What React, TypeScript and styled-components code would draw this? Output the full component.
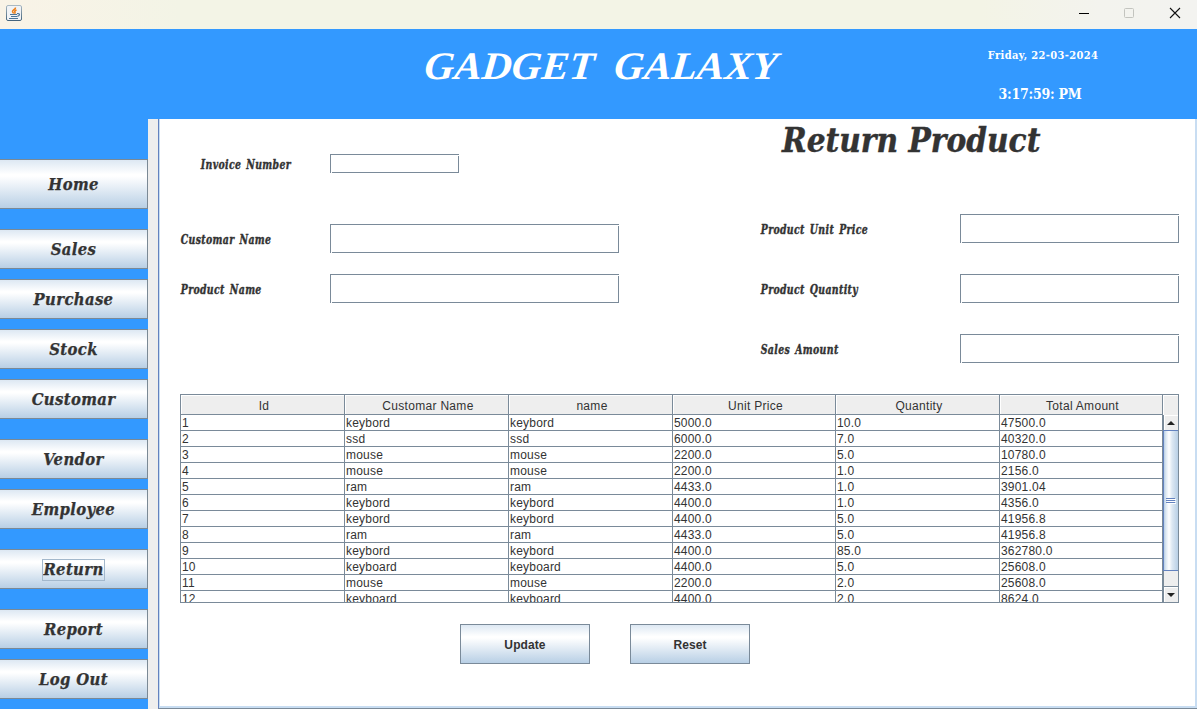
import React from "react";
import styled, { createGlobalStyle } from "styled-components";

const slab = `"DejaVu Serif Condensed", "DejaVu Serif", serif`;
const sans = `"Liberation Sans", Arial, sans-serif`;
const line = "#7a8a99";
const steel = "linear-gradient(#dde8f3 0%, #ffffff 30%, #ffffff 34%, #b8cfe5 100%)";

const GlobalStyle = createGlobalStyle`
  * { box-sizing: border-box; }
  body { margin: 0; background: #fff; overflow: hidden; }
`;

const Window = styled.div`
  width: 1197px;
  height: 709px;
  display: flex;
  flex-direction: column;
  font-family: ${sans};
  color: #333;
`;

const TitleBar = styled.div`
  height: 29px;
  flex: none;
  display: flex;
  align-items: flex-start;
  justify-content: space-between;
  padding: 5px 16px 0 6px;
  background: linear-gradient(90deg, #f9f3e7 0%, #f3f4e6 15%, #f3f4e6 82%, #f3f3ee 92%, #f3f3f0 100%);
`;

const Controls = styled.div`
  display: flex;
  gap: 34px;
  padding-top: 2px;
`;

const Header = styled.header`
  height: 90px;
  flex: none;
  display: grid;
  grid-template-columns: 424px 1fr 298px;
  background: #3399ff;
  color: #fff;
`;

const Brand = styled.h1`
  grid-column: 2;
  margin: 0;
  padding-top: 14px;
  font: italic bold 39px/46px "Liberation Serif", serif;
  white-space: pre;
  word-spacing: -3.5px;
  transform: scaleX(1.06) skewX(-5deg);
  transform-origin: left;
`;

const Clock = styled.div`
  display: flex;
  flex-direction: column;
  align-items: center;
  width: 282px;
  font-family: ${slab};
  font-weight: bold;
`;

const DateText = styled.div`
  font-size: 11px;
  line-height: 16px;
  margin: 19px 0 0 6px;
  letter-spacing: 0.35px;
`;

const TimeText = styled.div`
  font-size: 14px;
  line-height: 20px;
  margin-top: 20px;
  letter-spacing: -0.25px;
`;

const Body = styled.div`
  flex: 1;
  display: flex;
  min-height: 0;
`;

const Sidebar = styled.nav`
  width: 148px;
  flex: none;
  padding-top: 40px;
  background: #3399ff;
`;

const NavButton = styled.button<{ $height?: number; $gap?: number }>`
  display: flex;
  align-items: center;
  justify-content: center;
  width: 148px;
  height: ${(p) => p.$height ?? 40}px;
  margin: 0 0 ${(p) => p.$gap ?? 10}px;
  padding: 1px 0 0;
  border: 1px solid #7b8995;
  border-left: 0;
  background: ${steel};
  color: #333;
  font: italic bold 16.5px/22px ${slab};
  letter-spacing: 0.35px;
  -webkit-text-stroke: 0.25px #333;
`;

const NavText = styled.span<{ $focused?: boolean }>`
  padding: 0 1px;
  outline: ${(p) => (p.$focused ? "1px solid #a3b8cc" : "none")};
  outline-offset: -1px;
`;

const Divider = styled.div`
  width: 10px;
  flex: none;
  background: #eee;
`;

const Panel = styled.main`
  flex: 1;
  display: flex;
  flex-direction: column;
  min-width: 0;
  background: #fff;
  border-left: 1px solid #6382bf;
  border-bottom: 1px solid ${line};
  box-shadow: inset 1px 0 #c8ddf2, inset -2px -2px #c8ddf2;
  padding-left: 1px;
`;

const Form = styled.div`
  display: grid;
  grid-template-columns: 600px 1fr;
  height: 275px;
  flex: none;
`;

const Column = styled.div`
  display: flex;
  flex-direction: column;
`;

const Heading = styled.h2`
  margin: 0 0 51px 22px;
  font: italic bold 33px/44px ${slab};
  white-space: nowrap;
  -webkit-text-stroke: 0.4px #333;
`;

const Row = styled.label<{ $indent?: number; $label: number; $top?: number }>`
  display: grid;
  grid-template-columns: ${(p) => p.$label}px max-content;
  align-items: center;
  padding-left: ${(p) => p.$indent ?? 0}px;
  margin-top: ${(p) => p.$top ?? 0}px;
`;

const Label = styled.span`
  padding: 2px 0 0 1px;
  font: italic bold 13.3px/17px ${slab};
  letter-spacing: 0.45px;
  word-spacing: 2px;
  white-space: nowrap;
  -webkit-text-stroke: 0.4px #333;
  transform: scaleX(0.78);
  transform-origin: left;
`;

const Field = styled.input<{ $width: number; $height?: number }>`
  width: ${(p) => p.$width}px;
  height: ${(p) => p.$height ?? 29}px;
  padding: 0 5px;
  border: 0;
  border-radius: 0;
  outline: none;
  background:
    linear-gradient(${line}, ${line}) left top / 100% 1px no-repeat,
    linear-gradient(${line}, ${line}) left top / 1px 100% no-repeat,
    linear-gradient(${line}, ${line}) right bottom / 1px calc(100% - 2px) no-repeat,
    linear-gradient(${line}, ${line}) right bottom / calc(100% - 2px) 1px no-repeat,
    #fff;
`;

const TableFrame = styled.div`
  display: grid;
  grid-template-columns: 982px 16px;
  width: 999px;
  height: 209px;
  flex: none;
  margin-left: 20px;
  border: solid ${line};
  border-width: 1px 0 1px 1px;
  overflow: hidden;
`;

const TableRow = styled.div<{ $head?: boolean }>`
  display: grid;
  grid-template-columns: 164px 164px 164px 163px 164px 163px;
  grid-template-rows: 100%;
  height: ${(p) => (p.$head ? 20 : 16)}px;
  font-size: 12px;
  line-height: ${(p) => (p.$head ? 19 : 15)}px;
  text-align: ${(p) => (p.$head ? "center" : "left")};
  background: ${(p) => (p.$head ? "#eee" : "#fff")};
  letter-spacing: ${(p) => (p.$head ? 0.3 : 0.2)}px;
`;

const Cell = styled.div<{ $head?: boolean }>`
  padding: ${(p) => (p.$head ? "2px 0 0 3px" : "1px 1px 0")};
  border: solid ${line};
  border-width: 0 1px 1px 0;
  box-shadow: ${(p) => (p.$head ? "inset 1px 1px #fff" : "none")};
  white-space: nowrap;
`;

const TableBody = styled.div`
  height: 187px;
  overflow: hidden;
`;

const ScrollColumn = styled.div`
  display: flex;
  flex-direction: column;
  border-right: 1px solid ${line};
  background: #eee;
`;

const ScrollCorner = styled.div`
  height: 20px;
  flex: none;
  box-shadow: inset 1px 1px #fff;
`;

const ScrollButton = styled.div`
  height: 15px;
  flex: none;
  display: flex;
  align-items: center;
  justify-content: center;
  border-left: 1px solid ${line};
  box-shadow: inset 1px 1px #fff;
`;

const Thumb = styled.div`
  height: 141px;
  flex: none;
  display: flex;
  align-items: center;
  justify-content: center;
  padding-top: 1px;
  border: solid #6382bf;
  border-width: 1px 0 1px 1px;
  background: linear-gradient(90deg, #b8cfe5 0, #dde8f3 2px, #fff 5px, #dde8f3 8px, #b8cfe5 100%);
`;

const Track = styled.div`
  flex: 1;
  border-left: 1px solid ${line};
  border-bottom: 1px solid ${line};
`;

const Actions = styled.div`
  display: flex;
  gap: 40px;
  margin: 21px 0 0 300px;
`;

const ActionButton = styled.button<{ $width: number }>`
  width: ${(p) => p.$width}px;
  height: 40px;
  padding: 2px 0 0;
  border: 1px solid ${line};
  background: ${steel};
  color: #333;
  font: bold 12px ${sans};
  letter-spacing: 0.1px;
`;

const nav = [
  { text: "Home", height: 50, gap: 20 },
  { text: "Sales" },
  { text: "Purchase" },
  { text: "Stock" },
  { text: "Customar", gap: 20 },
  { text: "Vendor" },
  { text: "Employee", gap: 20 },
  { text: "Return", gap: 20, focused: true },
  { text: "Report" },
  { text: "Log Out" },
];

const columns = ["Id", "Customar Name", "name", "Unit Price", "Quantity", "Total Amount"];

const rows = [
  ["1", "keybord", "keybord", "5000.0", "10.0", "47500.0"],
  ["2", "ssd", "ssd", "6000.0", "7.0", "40320.0"],
  ["3", "mouse", "mouse", "2200.0", "5.0", "10780.0"],
  ["4", "mouse", "mouse", "2200.0", "1.0", "2156.0"],
  ["5", "ram", "ram", "4433.0", "1.0", "3901.04"],
  ["6", "keybord", "keybord", "4400.0", "1.0", "4356.0"],
  ["7", "keybord", "keybord", "4400.0", "5.0", "41956.8"],
  ["8", "ram", "ram", "4433.0", "5.0", "41956.8"],
  ["9", "keybord", "keybord", "4400.0", "85.0", "362780.0"],
  ["10", "keyboard", "keyboard", "4400.0", "5.0", "25608.0"],
  ["11", "mouse", "mouse", "2200.0", "2.0", "25608.0"],
  ["12", "keyboard", "keyboard", "4400.0", "2.0", "8624.0"],
];

function JavaIcon() {
  return (
    <svg width="16" height="16" viewBox="0 0 16 16" fill="none">
      <defs>
        <linearGradient id="frame" x1="0" y1="0" x2="0" y2="1">
          <stop offset="0" stopColor="#a9b8c2" />
          <stop offset="1" stopColor="#45647c" />
        </linearGradient>
      </defs>
      <rect x=".5" y=".5" width="15" height="15" rx="1.5" fill="#f1f3f6" stroke="url(#frame)" />
      <path d="M9.500 2.500C9.800 4.500 6.500 4.800 6.500 6.500c0 1 1 1.200 1.200 2M10.500 5C8.500 5.800 8.500 6.500 9 7.200c.3.5 0 1-.5 1.300" stroke="#ee7f18" strokeWidth="1.500" />
      <path d="M4 9.500h7M5 11.500h6M3 13.500h9M11 8.600c3.300-.6 3.200 2.200.3 2.800" stroke="#4f7597" strokeWidth="1.200" />
    </svg>
  );
}

export default function App() {
  return (
    <Window>
      <GlobalStyle />
      <TitleBar>
        <JavaIcon />
        <Controls>
          <svg width="12" height="12" viewBox="0 0 12 12">
            <path d="M2 6.500h10" stroke="#000" />
          </svg>
          <svg width="12" height="12" viewBox="0 0 12 12">
            <rect x="1.500" y="1.500" width="9" height="9" rx="1" fill="none" stroke="#c3c4bf" />
          </svg>
          <svg width="12" height="12" viewBox="0 0 12 12">
            <path d="M1 1l10 10M11 1L1 11" stroke="#111" strokeWidth="1.100" />
          </svg>
        </Controls>
      </TitleBar>
      <Header>
        <Brand>{"GADGET   GALAXY"}</Brand>
        <Clock>
          <DateText>Friday, 22-03-2024</DateText>
          <TimeText>3:17:59: PM</TimeText>
        </Clock>
      </Header>
      <Body>
        <Sidebar>
          {nav.map((n) => (
            <NavButton key={n.text} $height={n.height} $gap={n.gap}>
              <NavText $focused={n.focused}>{n.text}</NavText>
            </NavButton>
          ))}
        </Sidebar>
        <Divider />
        <Panel>
          <Form>
            <Column>
              <Row $indent={40} $label={130} $top={35}>
                <Label>Invoice Number</Label>
                <Field $width={129} $height={19} />
              </Row>
              <Row $indent={20} $label={150} $top={51}>
                <Label>Customar Name</Label>
                <Field $width={289} />
              </Row>
              <Row $indent={20} $label={150} $top={21}>
                <Label>Product Name</Label>
                <Field $width={289} />
              </Row>
            </Column>
            <Column>
              <Heading>Return Product</Heading>
              <Row $label={200}>
                <Label>Product Unit Price</Label>
                <Field $width={219} />
              </Row>
              <Row $label={200} $top={31}>
                <Label>Product Quantity</Label>
                <Field $width={219} />
              </Row>
              <Row $label={200} $top={31}>
                <Label>Sales Amount</Label>
                <Field $width={219} />
              </Row>
            </Column>
          </Form>
          <TableFrame>
            <div>
              <TableRow $head>
                {columns.map((c) => (
                  <Cell key={c} $head>{c}</Cell>
                ))}
              </TableRow>
              <TableBody>
                {rows.map((r) => (
                  <TableRow key={r[0]}>
                    {r.map((v, i) => (
                      <Cell key={i}>{v}</Cell>
                    ))}
                  </TableRow>
                ))}
              </TableBody>
            </div>
            <ScrollColumn>
              <ScrollCorner />
              <ScrollButton>
                <svg width="8" height="4" viewBox="0 0 8 4">
                  <path d="M0 4L4 0l4 4z" fill="#222" />
                </svg>
              </ScrollButton>
              <Thumb>
                <svg width="10" height="6" viewBox="0 0 10 6">
                  <path d="M0 .5h9M0 2.500h9M0 4.500h9" stroke="#6382bf" />
                  <path d="M1 1.500h9M1 3.500h9M1 5.500h9" stroke="#fff" />
                </svg>
              </Thumb>
              <Track />
              <ScrollButton>
                <svg width="8" height="4" viewBox="0 0 8 4">
                  <path d="M0 0h8L4 4z" fill="#222" />
                </svg>
              </ScrollButton>
            </ScrollColumn>
          </TableFrame>
          <Actions>
            <ActionButton $width={130}>Update</ActionButton>
            <ActionButton $width={120}>Reset</ActionButton>
          </Actions>
        </Panel>
      </Body>
    </Window>
  );
}
